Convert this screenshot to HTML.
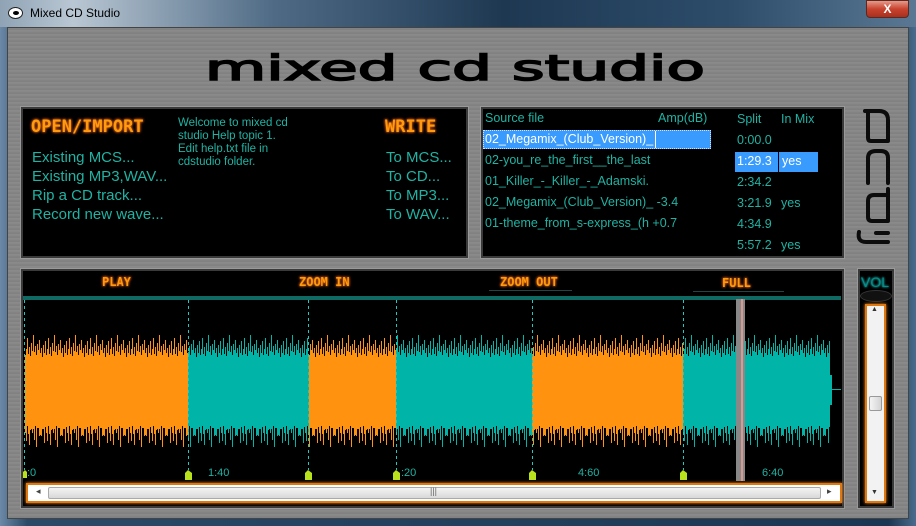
<!DOCTYPE html>
<html><head><meta charset="utf-8"><style>
*{margin:0;padding:0;box-sizing:border-box}
body{width:916px;height:526px;overflow:hidden;background:#1d3a55;font-family:"Liberation Sans",sans-serif;position:relative}
.abs{position:absolute}
.title{left:0;top:0;width:916px;height:27px;background:linear-gradient(90deg,#8fa3b5 0,#b9c7d3 8%,#4e6a85 30%,#1e3852 55%,#2d4d6b 80%,#5a7893 100%)}
.frame{left:0;top:27px;width:916px;height:499px;background:linear-gradient(90deg,#6c8aa8,#2a4a68 3%,#1b3652 97%,#4a6c8c)}
.inner{left:7px;top:27px;width:902px;height:492px;border:1px solid #444;background:repeating-linear-gradient(180deg,#8a8a8a 0,#7c7c7c 1px,#858585 2px,#909090 3px,#808080 4px);}
.panel{background:#000;border:2px solid #3a3a3a;box-shadow:0 0 0 1px #999}
.t{color:#1fb3a3;position:absolute;white-space:nowrap}
.big{font-size:15px}
.sm{font-size:11.5px;line-height:13px}
.led{position:absolute;color:#ff9a10;font-family:"DejaVu Sans Mono",monospace;font-weight:bold;text-shadow:0 0 3px #c05000,0 0 2px #ff7000;letter-spacing:0px}
.lst{font-size:12.5px;color:#1fb3a3;position:absolute;white-space:nowrap}
</style></head><body>
<div class="abs title"></div>
<div class="abs" style="left:8px;top:7px;width:15px;height:12px;border-radius:50%;background:#fff;border:1px solid #222"><div style="position:absolute;left:4px;top:3px;width:6px;height:4px;border-radius:50%;background:#000"></div></div>
<div class="abs" style="left:30px;top:6px;font-size:12px;color:#000">Mixed CD Studio</div>
<div class="abs" style="left:866px;top:0;width:43px;height:18px;border-radius:0 0 4px 4px;background:linear-gradient(#e89a8a,#c8432e 50%,#a8301e);border:1px solid #5a2a22;color:#fff;font-weight:bold;font-size:12px;text-align:center;line-height:16px">X</div>
<div class="abs frame"></div>
<div class="abs inner"></div>

<svg class="abs" style="left:0;top:0" width="916" height="526">
<text x="205" y="80" font-family="DejaVu Sans" font-size="35" textLength="500" lengthAdjust="spacingAndGlyphs" fill="#000" stroke="#000" stroke-width="1.5">mixed cd studio</text>
<g fill="none" stroke="#0c0c0c" stroke-width="4" stroke-linecap="round" stroke-linejoin="round">
<path d="M865,111 H879 Q888,111 888,120 V141 H871 Q868,141 868,138 V112"/>
<path d="M868,183 V158 Q868,151 876,151 H881 Q888,151 888,158 V183"/>
<path d="M888,189 V221 H872 Q868,221 868,217 V201 Q868,195 874,195 H888"/>
<path d="M859,232 Q857,242 866,242 H888"/>
<path d="M876,233 H888"/>
</g>
</svg>

<!-- left panel -->
<div class="abs panel" style="left:21px;top:107px;width:447px;height:151px"></div>
<div class="led" style="left:31px;top:117px;font-size:17px">OPEN/IMPORT</div>
<div class="led" style="left:385px;top:117px;font-size:17px">WRITE</div>
<div class="t big" style="left:32px;top:149px">Existing MCS...</div>
<div class="t big" style="left:32px;top:168px">Existing MP3,WAV...</div>
<div class="t big" style="left:32px;top:187px">Rip a CD track...</div>
<div class="t big" style="left:32px;top:206px">Record new wave...</div>
<div class="t sm" style="left:178px;top:117px">Welcome to mixed cd<br>studio Help topic 1.<br>Edit help.txt file in<br>cdstudio folder.</div>
<div class="t big" style="left:386px;top:149px">To MCS...</div>
<div class="t big" style="left:386px;top:168px">To CD...</div>
<div class="t big" style="left:386px;top:187px">To MP3...</div>
<div class="t big" style="left:386px;top:206px">To WAV...</div>

<!-- right list -->
<div class="abs panel" style="left:481px;top:107px;width:363px;height:151px"></div>
<div class="lst" style="left:485px;top:111px">Source file</div>
<div class="lst" style="left:658px;top:111px">Amp(dB)</div>
<div class="lst" style="left:737px;top:112px">Split</div>
<div class="lst" style="left:781px;top:112px">In Mix</div>
<div class="abs" style="left:483px;top:130px;width:228px;height:19px;background:#3a9bff;border:1px dotted #d0e4ff"></div>
<div class="abs" style="left:655px;top:131px;width:1px;height:17px;background:#fff"></div>
<div class="abs" style="left:483px;top:131px;width:172px;height:17px;overflow:hidden"><div class="lst" style="left:2px;top:1px;color:#fff">02_Megamix_(Club_Version)_</div></div>
<div class="abs" style="left:483px;top:152px;width:172px;height:17px;overflow:hidden"><div class="lst" style="left:2px;top:1px">02-you_re_the_first__the_last</div></div>
<div class="abs" style="left:483px;top:173px;width:172px;height:17px;overflow:hidden"><div class="lst" style="left:2px;top:1px">01_Killer_-_Killer_-_Adamski.</div></div>
<div class="lst" style="left:485px;top:195px">02_Megamix_(Club_Version)_ -3.4</div>
<div class="lst" style="left:485px;top:216px">01-theme_from_s-express_(h +0.7</div>
<div class="abs" style="left:735px;top:152px;width:43px;height:20px;background:#3a9bff"></div>
<div class="abs" style="left:779px;top:152px;width:39px;height:20px;background:#3a9bff"></div>
<div class="lst" style="left:737px;top:133px">0:00.0</div>
<div class="lst" style="left:737px;top:154px;color:#fff">1:29.3</div><div class="lst" style="left:782px;top:154px;color:#fff">yes</div>
<div class="lst" style="left:737px;top:175px">2:34.2</div>
<div class="lst" style="left:737px;top:196px">3:21.9</div><div class="lst" style="left:781px;top:196px">yes</div>
<div class="lst" style="left:737px;top:217px">4:34.9</div>
<div class="lst" style="left:737px;top:238px">5:57.2</div><div class="lst" style="left:781px;top:238px">yes</div>

<!-- wave panel -->
<div class="abs panel" style="left:21px;top:269px;width:823px;height:239px"></div>
<div class="led" style="left:102px;top:275px;font-size:12px">PLAY</div>
<div class="led" style="left:299px;top:275px;font-size:12px">ZOOM IN</div>
<div class="led" style="left:500px;top:275px;font-size:12px">ZOOM OUT</div>
<div class="led" style="left:722px;top:276px;font-size:12px">FULL</div>
<div class="abs" style="left:489px;top:290px;width:83px;height:1px;background:#244"></div>
<div class="abs" style="left:693px;top:291px;width:91px;height:1px;background:#244"></div>
<svg class="abs" style="left:0;top:0" width="916" height="526">
<defs>
<g id="sp">
<rect x="0" y="22" width="1" height="72"/><rect x="1" y="10" width="1" height="84"/><rect x="2" y="18" width="1" height="90"/>
<rect x="3" y="6" width="1" height="86"/><rect x="4" y="20" width="1" height="78"/><rect x="5" y="14" width="1" height="92"/>
<rect x="6" y="3" width="1" height="88"/><rect x="7" y="19" width="1" height="80"/><rect x="8" y="12" width="1" height="98"/>
<rect x="9" y="21" width="1" height="74"/><rect x="10" y="8" width="1" height="86"/><rect x="11" y="16" width="1" height="82"/>
<rect x="12" y="0" width="1" height="94"/><rect x="13" y="17" width="1" height="88"/><rect x="14" y="11" width="1" height="80"/>
<rect x="15" y="20" width="1" height="92"/><rect x="16" y="9" width="1" height="84"/><rect x="17" y="15" width="1" height="78"/>
<rect x="18" y="5" width="1" height="96"/><rect x="19" y="18" width="1" height="82"/><rect x="20" y="13" width="1" height="88"/>
<rect x="0" y="25" width="21" height="62"/>
</g>
<pattern id="po" width="21" height="112" patternUnits="userSpaceOnUse" x="0" y="335"><use href="#sp" fill="#ff920e"/></pattern>
<pattern id="pt" width="21" height="112" patternUnits="userSpaceOnUse" x="7" y="335"><use href="#sp" fill="#00b4a8"/></pattern>
</defs>
<rect x="23" y="296" width="818" height="4" fill="#0e6a62"/>
<rect x="25" y="335" width="163" height="112" fill="url(#po)"/>
<rect x="188" y="335" width="121" height="112" fill="url(#pt)"/>
<rect x="309" y="335" width="87" height="112" fill="url(#po)"/>
<rect x="396" y="335" width="136" height="112" fill="url(#pt)"/>
<rect x="532" y="335" width="151" height="112" fill="url(#po)"/>
<rect x="683" y="335" width="147" height="112" fill="url(#pt)"/>
<rect x="828" y="375" width="4" height="30" fill="#00b4a8"/><rect x="830" y="389" width="11" height="1" fill="#00b4a8"/>
<g stroke="#1fc9c0" stroke-width="1" stroke-dasharray="3,3">
<line x1="24.5" y1="300" x2="24.5" y2="470"/><line x1="188.5" y1="300" x2="188.5" y2="470"/>
<line x1="308.5" y1="300" x2="308.5" y2="470"/><line x1="396.5" y1="300" x2="396.5" y2="470"/>
<line x1="532.5" y1="300" x2="532.5" y2="470"/><line x1="683.5" y1="300" x2="683.5" y2="470"/>
</g>
<rect x="736" y="299" width="9" height="182" fill="#888"/><rect x="741" y="299" width="2" height="182" fill="#d89a90"/>
<g fill="#b8e21c">
<path d="M23,478 V472 L25,470 L27,472 V478Z"/><path d="M185,480 V473 L188,470 L192,473 V480Z"/>
<path d="M305,480 V473 L308,470 L312,473 V480Z"/><path d="M393,480 V473 L396,470 L400,473 V480Z"/>
<path d="M529,480 V473 L532,470 L536,473 V480Z"/><path d="M680,480 V473 L683,470 L687,473 V480Z"/>
</g>
<g fill="#1fb3a3" font-family="Liberation Sans" font-size="11">
<text x="27" y="476">:0</text><text x="208" y="476">1:40</text><text x="401" y="476">:20</text>
<text x="578" y="476">4:60</text><text x="762" y="476">6:40</text>
</g>
</svg>
<div class="abs" style="left:26px;top:483px;width:816px;height:20px;background:#fff;border:2px solid #e07810;box-shadow:0 0 3px #ff9020"></div>
<div class="abs" style="left:48px;top:487px;width:773px;height:12px;background:linear-gradient(#f4f4f4,#d8d8d8);border:1px solid #aaa;border-radius:2px"></div>
<div class="abs" style="left:36px;top:486px;font-size:9px;color:#444">◂</div>
<div class="abs" style="left:827px;top:486px;font-size:9px;color:#444">▸</div>
<div class="abs" style="left:430px;top:486px;font-size:9px;color:#666">|||</div>

<!-- vol -->
<div class="abs panel" style="left:858px;top:269px;width:36px;height:239px"></div>
<div class="abs" style="left:861px;top:274px;font-size:14px;color:#0e8a84;text-shadow:0 0 2px #0ff">VOL</div>
<div class="abs" style="left:860px;top:290px;width:32px;height:12px;border-radius:50%;background:#111;border:1px solid #333"></div>
<div class="abs" style="left:865px;top:304px;width:21px;height:199px;background:#f2f2f2;border:2px solid #e07810;box-shadow:0 0 3px #ff9020"></div>
<div class="abs" style="left:871px;top:306px;font-size:7px;color:#333">▲</div>
<div class="abs" style="left:871px;top:489px;font-size:7px;color:#333">▼</div>
<div class="abs" style="left:869px;top:396px;width:13px;height:15px;background:linear-gradient(90deg,#f4f4f4,#d4d4d4);border:1px solid #999;border-radius:2px"></div>
</body></html>
